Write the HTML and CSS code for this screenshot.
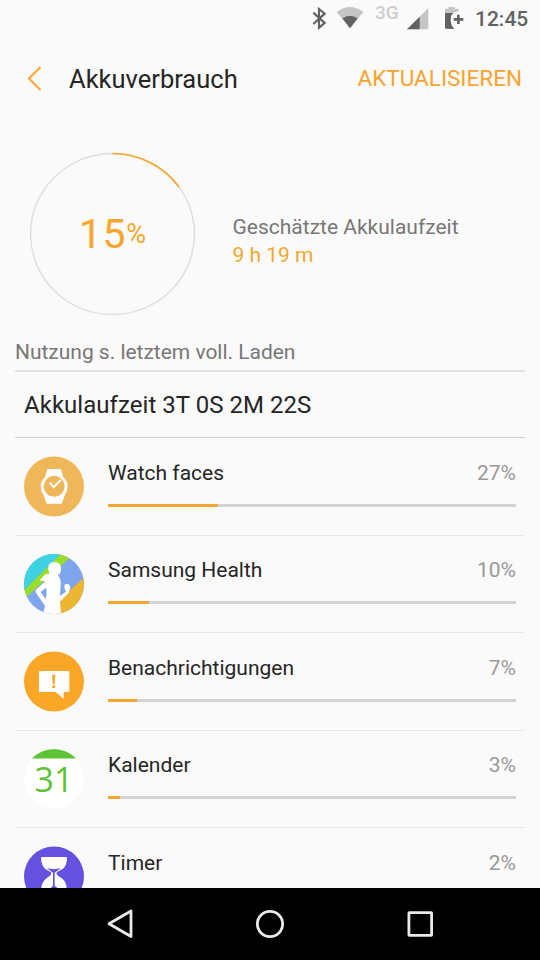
FILE: index.html
```html
<!DOCTYPE html>
<html lang="de">
<head>
<meta charset="utf-8">
<title>Akkuverbrauch</title>
<link rel="stylesheet" href="styles.css">
</head>
<body>
<div class="screen">
  <header class="status">
    <svg class="bluetooth" width="14" height="22" viewBox="36 21 42 66"><path d="M40 38 74 69 57 83V27L74 41 40 72" fill="none" stroke="#626262" stroke-width="6.5"/></svg>
    <svg class="wifi" width="28" height="24" viewBox="109 18 84 72"><path d="M111 36Q151 6 191 36L151 85Z" fill="#c5c5c5"/><path d="M128 55Q151 40 174 55L151 85Z" fill="#626262"/></svg>
    <span class="network">3G</span>
    <svg class="signal" width="22" height="22" viewBox="320 24 66 66"><path d="M320 88 384 24V88Z" fill="#c5c5c5"/><path d="M320 88 358 50V88Z" fill="#626262"/></svg>
    <svg class="battery" width="20" height="24" viewBox="433 18 60 72"><path d="M436 26H446V21H465V26H476V40H436Z" fill="#c5c5c5"/><path d="M436 39H458Q448 46 448 59Q448 76 464 86H436Z" fill="#626262"/><path d="M478 34Q453 36 453 59Q453 79 468 86H480V34Z" fill="#fafafa"/><path d="M448 39H460Q453 46 453 59Q453 76 464 86H448Z" fill="#626262"/><path d="M476 44V72M462 58H491" stroke="#626262" stroke-width="8"/></svg>
    <span class="clock">12:45</span>
  </header>

  <nav class="appbar">
    <svg class="back" width="16" height="26" viewBox="0 0 16 26"><path d="M13.500 2 2 13.500 13.500 25" fill="none" stroke="#f9a42e" stroke-width="2"/></svg>
    <h1 class="title">Akkuverbrauch</h1>
    <span class="refresh">AKTUALISIEREN</span>
  </nav>

  <section class="summary">
    <div class="gauge">
      <svg class="ring" width="166" height="163" viewBox="0 0 166 163"><ellipse cx="82.500" cy="81" rx="82" ry="80.500" fill="none" stroke="#dedede" stroke-width="1.400"/><path d="M82.500 .5A82 80.500 0 0 1 149.200 34.200" fill="none" stroke="#f5a72c" stroke-width="1.700"/></svg>
      <div class="level"><span class="level-number">15</span><span class="level-unit">%</span></div>
    </div>
    <div class="estimate">
      <p class="estimate-label">Geschätzte Akkulaufzeit</p>
      <p class="estimate-value">9 h 19 m</p>
    </div>
  </section>

  <main class="usage">
    <h2 class="usage-head">Nutzung s. letztem voll. Laden</h2>
    <p class="runtime">Akkulaufzeit 3T 0S 2M 22S</p>
    <ul class="apps">
      <li class="app">
        <svg class="icon" viewBox="0 .5 60 60"><circle cx="30" cy="30" r="30" fill="#f0b75a"/><g transform="translate(-14 -11.500) scale(.33333)"><path d="M112 72H153L160 97Q173 108 173 124Q173 138 165 149L155 176H110L100 149Q92 138 92 124Q92 108 105 97Z" fill="#fff"/><circle cx="132.500" cy="124" r="31.500" fill="#f0b75a"/><path d="M119 113 131 126 153 105" fill="none" stroke="#fff" stroke-width="6"/></g></svg>
        <div class="info"><span class="name">Watch faces</span><span class="share">27%</span><div class="track"><div class="fill" style="width:27%"></div></div></div>
      </li>
      <li class="app">
        <svg class="icon" viewBox="0 0 60 60"><defs><clipPath id="disc"><circle cx="30" cy="30" r="30"/></clipPath></defs><g clip-path="url(#disc)"><g transform="translate(-14 -9) scale(.33333)"><path d="M40 20H225V215H40Z" fill="#7fa5ed"/><path d="M225 95 145 168V215H225Z" fill="#edb632"/><path d="M30 175 48 157 178 40V20H140L30 145Z" fill="#9bdc27"/><path d="M30 148 42 137 67 111 151 28V15H30Z" fill="#3fd2e4"/></g><path transform="translate(-2 -2) scale(.33333)" d="M79 50Q78 30 97 30Q117 30 117 50Q117 65 107 70Q117 78 116 97L114 132L132 119Q123 106 130 96L141 97Q147 106 143 114L140 122L114 149L118 198H59L69 162L42 122Q38 116 44 111L70 88Q60 88 52 84Q62 78 64 72Q72 63 82 66Q79 58 79 50ZM56 120 71 141Q76 124 72 107Z" fill="#fff" fill-rule="evenodd"/></g></svg>
        <div class="info"><span class="name">Samsung Health</span><span class="share">10%</span><div class="track"><div class="fill" style="width:10%"></div></div></div>
      </li>
      <li class="app">
        <svg class="icon" viewBox="0 .5 60 60"><circle cx="30" cy="30" r="30" fill="#faa626"/><g transform="translate(-14 -9.500) scale(.33333)"><path d="M90 87H175Q178 87 178 90V147Q178 150 175 150H161V171L137 150H90Q87 150 87 147V90Q87 87 90 87Z" fill="#fff"/><path d="M126 98H136L134 126H128Z" fill="#faa626"/><circle cx="131" cy="134" r="5" fill="#faa626"/></g></svg>
        <div class="info"><span class="name">Benachrichtigungen</span><span class="share">7%</span><div class="track"><div class="fill" style="width:7%"></div></div></div>
      </li>
      <li class="app">
        <svg class="icon" viewBox="0 .5 60 60"><circle cx="30" cy="30" r="30" fill="#fff"/><path d="M8 10A30 30 0 0 1 52 10Z" fill="#5dc436"/><text class="date" x="30" y="43.800" text-anchor="middle">31</text></svg>
        <div class="info"><span class="name">Kalender</span><span class="share">3%</span><div class="track"><div class="fill" style="width:3%"></div></div></div>
      </li>
      <li class="app">
        <svg class="icon" viewBox="0 .5 60 60"><circle cx="30" cy="30" r="30" fill="#6451e0"/><g transform="translate(-14 -8.500) scale(.33333)"><path d="M97 57H168Q171 57 171 61Q170 84 159 92L140 103V110L158 123Q169 133 170 150V175H94V150Q95 134 107 123L123 110V103L105 92Q95 84 93 61Q93 57 97 57Z" fill="#fff"/><path d="M111 91Q131 96 152 91L134 104V143L145 152H120L129 143V104Z" fill="#6451e0"/></g></svg>
        <div class="info"><span class="name">Timer</span><span class="share">2%</span><div class="track"><div class="fill" style="width:2%"></div></div></div>
      </li>
    </ul>
  </main>

  <footer class="navbar">
    <svg width="30" height="30" viewBox="0 0 30 30"><path d="M26 2V27.500L4 14.800Z"/></svg>
    <svg width="30" height="30" viewBox="0 0 30 30"><circle cx="15" cy="15" r="12.600"/></svg>
    <svg width="30" height="30" viewBox="0 0 30 30"><rect x="3.900" y="3.700" width="22.700" height="22.600" rx=".5"/></svg>
  </footer>
</div>
</body>
</html>
```

FILE: styles.css
```css
* { box-sizing: border-box; margin: 0; padding: 0; }
body { background: #fafafa; font-family: Roboto, "Liberation Sans", sans-serif; color: #252525; }
svg { display: block; flex: none; overflow: visible; }
.screen { width: 540px; height: 960px; overflow: hidden; display: flex; flex-direction: column; }

.status { height: 38px; flex: none; display: flex; align-items: flex-start; padding-left: 312px; white-space: nowrap; }
.bluetooth { margin-top: 7px; }
.wifi { margin: 6px 0 0 10px; }
.network { margin-left: 11px; width: 25px; font-size: 19px; line-height: 26px; font-weight: 500; color: #cdcdcd; }
.signal { margin: 8px 0 0 7px; }
.battery { margin: 6px 0 0 15px; }
.clock { margin-left: 11px; font-size: 21px; line-height: 38px; font-weight: 500; color: #626262; }

.appbar { height: 82px; flex: none; display: flex; align-items: center; padding: 0 18px 0 27px; }
.back { margin-top: -2px; }
.title { margin-left: 26px; font-size: 25.5px; font-weight: 400; }
.refresh { margin-left: auto; font-size: 22.5px; color: #f9a42e; position: relative; top: -1px; }

.summary { height: 213px; flex: none; display: flex; padding: 32.5px 0 0 29.5px; }
.gauge { width: 166px; height: 163px; display: grid; }
.ring, .level { grid-area: 1 / 1; }
.level { display: flex; justify-content: center; align-items: center; color: #f5a72c; }
.level-number { font-size: 41px; line-height: 48px; letter-spacing: .7px; }
.level-unit { font-size: 27px; line-height: 48px; }
.estimate { margin-left: 37px; padding-top: 60px; font-size: 21px; line-height: 28px; }
.estimate-label { color: #777; }
.estimate-value { color: #f5a72c; }

.usage { flex: 1; min-height: 0; overflow: hidden; padding: 0 15px; }
.usage-head { height: 39px; border-bottom: 2px solid #e2e2e2; font-size: 21px; line-height: 38px; font-weight: 400; letter-spacing: -.02px; color: #777; }
.runtime { height: 66px; border-bottom: 1px solid #d0d0d0; padding-left: 9px; font-size: 24px; line-height: 67px; letter-spacing: .04px; }
.apps { list-style: none; }
.app { height: 97.5px; border-bottom: 1px solid #e8e8e8; display: flex; padding: 18.5px 9px 0; }
.icon { width: 60px; height: 60px; }
.date { font-family: "Open Sans", "Noto Sans", sans-serif; font-weight: 400; font-size: 34px; fill: #5dc436; }
.info { flex: 1; margin-left: 24px; display: grid; grid-template-columns: 1fr auto; grid-template-rows: 32px 3px; row-gap: 15px; }
.name { font-size: 21px; line-height: 33px; }
.share { font-size: 21px; line-height: 33px; color: #999; }
.track { grid-column: 1 / 3; background: #d3d3d3; }
.fill { height: 100%; background: #f6a731; }

.navbar { height: 72px; flex: none; background: #000; display: flex; justify-content: space-between; align-items: center; padding: 0 105px; }
.navbar svg { fill: none; stroke: #e9e9e9; stroke-width: 2.8; stroke-linejoin: round; }
```
